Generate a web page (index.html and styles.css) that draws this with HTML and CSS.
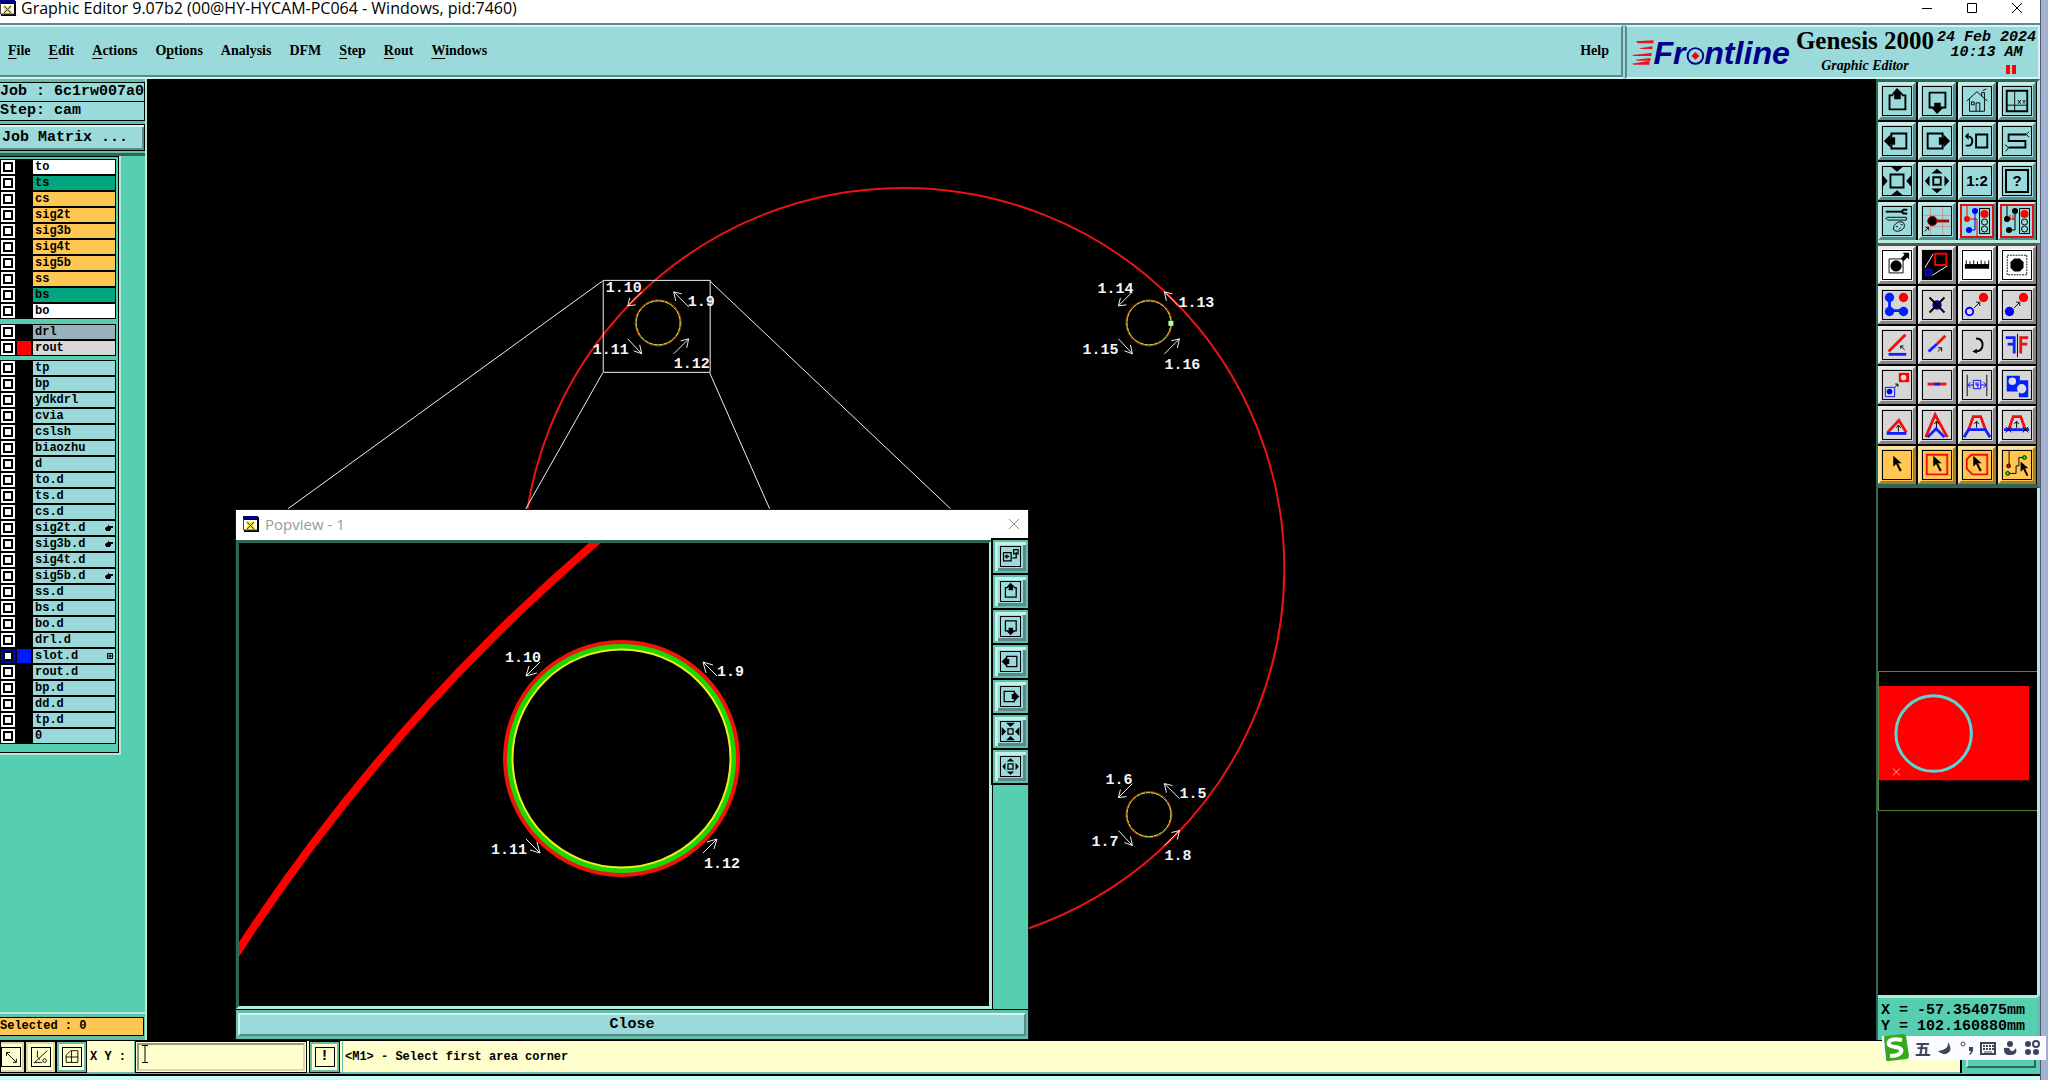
FILE: index.html
```html
<!DOCTYPE html>
<html lang="en">
<head>
<meta charset="utf-8">
<title>Graphic Editor</title>
<link rel="stylesheet" href="styles.css">
</head>
<body>
<svg class="defs" aria-hidden="true">
  <symbol id="up" viewBox="0 0 30 30"><path d="M11 9H7V24H24V9H20" class="k2"/><path d="M15 1l7 7h-3v5h-7v-5h-3z"/></symbol>
  <symbol id="down" viewBox="0 0 30 30"><path d="M12 22H7V6H24V22H19" class="k2"/><path d="M15 29l7-7h-3v-5h-7v5h-3z"/></symbol>
  <symbol id="left" viewBox="0 0 30 30"><path d="M9 11V7H25V23H9V19" class="k2"/><path d="M1 15l7-7v3h5v8h-5v3z"/></symbol>
  <symbol id="right" viewBox="0 0 30 30"><path d="M21 11V7H5V23H21V19" class="k2"/><path d="M29 15l-7-7v3h-5v8h5v3z"/></symbol>
  <symbol id="pan" viewBox="0 0 30 30"><path d="M11 11h8v8h-8z" class="k2"/><path d="M15 2l6 5h-12zM15 28l6-5h-12zM2 15l5-6v12zM28 15l-5-6v12z"/></symbol>
  <symbol id="zin" viewBox="0 0 30 30"><path d="M11 11h8v8h-8z" class="k2"/><path d="M8 1h14l-7 7zM8 29h14l-7-7zM1 8v14l7-7zM29 8v14l-7-7z"/></symbol>
  <symbol id="xwin" viewBox="0 0 16 16"><path d="M1 1h15v15h-15z"/><path fill="#fffff0" d="M1 4h13v10h-13z"/><path fill="#000080" d="M0 0h15v3h-15z"/><path fill="none" stroke="#e6d820" stroke-width="3" d="M4 6l7 7M11 6l-7 7"/><path fill="none" stroke="#444" d="M4 6l7 7M11 6l-7 7M.5 3v11h14"/></symbol>
  <symbol id="cursor" viewBox="0 0 12 18"><path d="M1 0v12l3-3 4 8 2-1-4-8h4z"/></symbol>
</svg>

<div class="window">
  <header class="titlebar">
    <svg class="appicon"><use href="#xwin"/></svg>
    <h1>Graphic Editor 9.07b2 (00@HY-HYCAM-PC064 - Windows, pid:7460)</h1>
    <div class="winbtns">
      <button aria-label="Minimize"><svg viewBox="0 0 12 12"><path d="M1 6.500h10"/></svg></button>
      <button aria-label="Maximize"><svg viewBox="0 0 12 12"><path d="M1.500 1.500h9v9h-9z"/></svg></button>
      <button aria-label="Close window"><svg viewBox="0 0 12 12"><path d="M1 1l10 10M11 1L1 11"/></svg></button>
    </div>
  </header>

  <div class="top">
    <nav class="menubar">
      <button><u>F</u>ile</button><button><u>E</u>dit</button><button><u>A</u>ctions</button><button>O<u>p</u>tions</button><button>Analysis</button><button>DFM</button><button><u>S</u>tep</button><button><u>R</u>out</button><button><u>W</u>indows</button>
      <button class="help">Help</button>
    </nav>
    <section class="brand">
      <svg class="logo" viewBox="0 0 166 48" role="img" aria-label="Frontline">
        <path fill="#e8131b" d="M5 11l18-1v3H7zM9 18l13-2v3H10zM1 25l20-2v3H3zM5 30l15-2v3H6zM1 34l18-3v4H3z"/>
        <text x="23" y="34">Fr</text><text x="75" y="34">ntline</text>
        <circle cx="66" cy="26" r="8" fill="none" stroke="#00008b" stroke-width="2"/>
        <path fill="#f00000" d="M66 22l4 4-4 4-4-4z"/>
      </svg>
      <div class="product"><strong>Genesis 2000</strong><em>Graphic Editor</em></div>
      <div class="clock"><span>24 Feb 2024</span><span>10:13 AM</span><i></i></div>
    </section>
  </div>

  <main>
    <aside class="side">
      <div class="job">
        <p>Job : 6c1rw007a0</p>
        <p>Step: cam</p>
      </div>
      <div class="matrix"><button>Job Matrix ...</button></div>
      <div class="layers">
        <div class="group">
          <label class="w"><input type="checkbox"><i></i><span>to</span></label>
          <label class="g"><input type="checkbox"><i></i><span>ts</span></label>
          <label class="o"><input type="checkbox"><i></i><span>cs</span></label>
          <label class="o"><input type="checkbox"><i></i><span>sig2t</span></label>
          <label class="o"><input type="checkbox"><i></i><span>sig3b</span></label>
          <label class="o"><input type="checkbox"><i></i><span>sig4t</span></label>
          <label class="o"><input type="checkbox"><i></i><span>sig5b</span></label>
          <label class="o"><input type="checkbox"><i></i><span>ss</span></label>
          <label class="g"><input type="checkbox"><i></i><span>bs</span></label>
          <label class="w"><input type="checkbox"><i></i><span>bo</span></label>
        </div>
        <div class="group">
          <label class="drill"><input type="checkbox"><i></i><span>drl</span></label>
          <label class="rout"><input type="checkbox"><i></i><span>rout</span></label>
        </div>
        <div class="group">
          <label><input type="checkbox"><i></i><span>tp</span></label>
          <label><input type="checkbox"><i></i><span>bp</span></label>
          <label><input type="checkbox"><i></i><span>ydkdrl</span></label>
          <label><input type="checkbox"><i></i><span>cvia</span></label>
          <label><input type="checkbox"><i></i><span>cslsh</span></label>
          <label><input type="checkbox"><i></i><span>biaozhu</span></label>
          <label><input type="checkbox"><i></i><span>d</span></label>
          <label><input type="checkbox"><i></i><span>to.d</span></label>
          <label><input type="checkbox"><i></i><span>ts.d</span></label>
          <label><input type="checkbox"><i></i><span>cs.d</span></label>
          <label><input type="checkbox"><i></i><span>sig2t.d<svg viewBox="0 0 8 8"><path d="M0 4l3-2 1-2v2h4v2h-2v2h-1v1H1z"/></svg></span></label>
          <label><input type="checkbox"><i></i><span>sig3b.d<svg viewBox="0 0 8 8"><path d="M0 4l3-2 1-2v2h4v2h-2v2h-1v1H1z"/></svg></span></label>
          <label><input type="checkbox"><i></i><span>sig4t.d</span></label>
          <label><input type="checkbox"><i></i><span>sig5b.d<svg viewBox="0 0 8 8"><path d="M0 4l3-2 1-2v2h4v2h-2v2h-1v1H1z"/></svg></span></label>
          <label><input type="checkbox"><i></i><span>ss.d</span></label>
          <label><input type="checkbox"><i></i><span>bs.d</span></label>
          <label><input type="checkbox"><i></i><span>bo.d</span></label>
          <label><input type="checkbox"><i></i><span>drl.d</span></label>
          <label class="active"><input type="checkbox" checked><i></i><span>slot.d<svg viewBox="0 0 8 8"><path class="k1" d="M2.500 1.500h5v5h-5zM5 1.500v5M2.500 4h5"/></svg></span></label>
          <label><input type="checkbox"><i></i><span>rout.d</span></label>
          <label><input type="checkbox"><i></i><span>bp.d</span></label>
          <label><input type="checkbox"><i></i><span>dd.d</span></label>
          <label><input type="checkbox"><i></i><span>tp.d</span></label>
          <label><input type="checkbox"><i></i><span>0</span></label>
        </div>
      </div>
      <div class="selected"><p>Selected : 0</p></div>
    </aside>

    <section class="canvas">
      <svg class="board" viewBox="147 79 1730 961" preserveAspectRatio="xMinYMin meet">
        <circle cx="904" cy="569" r="381" fill="none" stroke="#ea1414" stroke-width="2"/>
        <g class="thin"><path d="M603.500 280.500h107v92h-107zM603 281L288 509M710 281L951 509M603 373L526 509M710 373L770 509"/></g>
        <g id="ring">
          <circle cx="658.500" cy="323" r="23" fill="none" stroke="#c83008" stroke-width="1"/>
          <circle cx="658.500" cy="323" r="22" fill="none" stroke="#3fa020"/>
          <circle cx="658.500" cy="323" r="22" fill="none" stroke="#f0d830" stroke-dasharray="4 1"/>
          <g class="thin"><path d="M642 292l-14 14l2-8M628 306l8-1M689 307l-15-15l8 2M674 292l2 9M628 339l14 15l-8-3M642 354l-2-9M674 354l15-15l-8 2M689 339l-2 9"/></g>
        </g>
        <use href="#ring" x="491"/><use href="#ring" x="491" y="492"/>
        <path fill="#b0ffb0" d="M1169 321h5v5h-5z"/>
        <g class="tag">
          <text x="606" y="292">1.10</text><text x="688" y="306">1.9</text><text x="593" y="354">1.11</text><text x="674" y="368">1.12</text>
          <text x="1098" y="293">1.14</text><text x="1179" y="307">1.13</text><text x="1083" y="354">1.15</text><text x="1165" y="369">1.16</text>
          <text x="1106" y="784">1.6</text><text x="1180" y="798">1.5</text><text x="1092" y="846">1.7</text><text x="1165" y="860">1.8</text>
        </g>
      </svg>

      <section class="popview">
        <header><svg class="appicon"><use href="#xwin"/></svg><h2>Popview - 1</h2>
          <button aria-label="Close popview"><svg viewBox="0 0 12 12"><path d="M1 1l10 10M11 1L1 11"/></svg></button></header>
        <div class="popbody">
          <svg class="popcanvas" viewBox="239 543 750 463">
            <circle cx="1837" cy="1990" r="1907" fill="none" stroke="#f00" stroke-width="8"/>
            <circle cx="621.500" cy="758.500" r="116" fill="none" stroke="#f01408" stroke-width="5"/>
            <circle cx="621.500" cy="758.500" r="112" fill="none" stroke="#18d800" stroke-width="5"/>
            <circle cx="621.500" cy="758.500" r="109" fill="none" stroke="#f0f020" stroke-width="2"/>
            <g class="thin"><path d="M540 662l-14 14l3-10M526 676l11-3M717 676l-14-14l10 3M703 662l3 11M526 839l14 14l-10-3M540 853l-3-11M703 853l14-14l-10 3M717 839l-3 10"/></g>
            <g class="tag"><text x="505" y="662">1.10</text><text x="717" y="676">1.9</text><text x="491" y="854">1.11</text><text x="704" y="868">1.12</text></g>
          </svg>
          <div class="poptools">
            <button aria-label="Transfer view"><svg viewBox="0 0 30 30"><path class="k2" d="M4 9h12v13h-12zM20 4h7v7h-7zM24 8v9h-6"/><path class="k2" d="M13 15h-6M10 12l-3 3 3 3"/></svg></button>
            <button aria-label="Up"><svg><use href="#up"/></svg></button>
            <button aria-label="Down"><svg><use href="#down"/></svg></button>
            <button aria-label="Left"><svg><use href="#left"/></svg></button>
            <button aria-label="Right"><svg><use href="#right"/></svg></button>
            <button aria-label="Zoom in"><svg><use href="#zin"/></svg></button>
            <button aria-label="Zoom out"><svg><use href="#pan"/></svg></button>
          </div>
        </div>
        <footer><button>Close</button></footer>
      </section>
    </section>

    <aside class="tools">
      <div class="pad view">
        <button aria-label="Pan up"><svg><use href="#up"/></svg></button>
        <button aria-label="Pan down"><svg><use href="#down"/></svg></button>
        <button aria-label="Home"><svg viewBox="0 0 30 30"><path class="k1 bold" d="M4 15L15 5l11 10M7 13v13h16V13M14 26v-9h4v9M9 16h3v3h-3zM20 10V6h3v6M21 4l4-2"/></svg></button>
        <button aria-label="Zoom to coordinates"><svg viewBox="0 0 30 30"><path class="k2" d="M4 4h22v22h-22z"/><path class="k1" d="M12.500 4v22M4 19.500h22M16 14l3 4M19 14l-3 4M21 14l1.500 2L24 14M22.500 16v2"/></svg></button>
        <button aria-label="Pan left"><svg><use href="#left"/></svg></button>
        <button aria-label="Pan right"><svg><use href="#right"/></svg></button>
        <button aria-label="Previous view"><svg viewBox="0 0 30 30"><path class="k2" d="M14 8h12v14h-12zM3 20h4q3-1 3-5t-4-5"/><path d="M2 10l4-4v8z"/></svg></button>
        <button aria-label="Snake"><svg viewBox="0 0 30 30"><path class="k2" d="M25 8H6v7h18v7H6"/><path class="k1" d="M25 8l3-3M25 8l3 3M6 22l-4-3M6 22l-3 4"/></svg></button>
        <button aria-label="Zoom in"><svg viewBox="0 0 30 30"><path class="k2" d="M8 8h14v14h-14z"/><path d="M9 0h12l-6 5zM9 30h12l-6-5zM0 9v12l5-6zM30 9v12l-5-6z"/></svg></button>
        <button aria-label="Zoom out"><svg><use href="#pan"/></svg></button>
        <button aria-label="Zoom one to two"><b>1:2</b></button>
        <button aria-label="Query"><b class="boxed">?</b></button>
        <button aria-label="Options"><svg viewBox="0 0 30 30"><path class="k2" d="M3 5h17"/><path class="k1" d="M3 12l2-1h20v3H5zM12 20q3-5 9-4 4 4 0 8-6 4-10 0zM14 21h2M19 19h2M17 24l2-2"/><path class="k2" d="M26 3h-4l-2 2 2 2h4"/></svg></button>
        <button aria-label="Measure"><svg viewBox="0 0 30 30"><path stroke="#d09090" d="M8 0v30M21 0v30M0 9h30M0 21h30"/><path stroke="#a00" stroke-width="3" d="M10 15h18"/><circle cx="10" cy="15" r="5" stroke="#c00"/><path class="k1" d="M2 26l4-4M3 22h3v3"/></svg></button>
        <button class="on" aria-label="Highlight nets"><svg viewBox="0 0 30 30"><path fill="none" stroke="#f00" d="M5 0v13h10v17"/><path fill="none" stroke="#00f" d="M13 5v19H7"/><circle cx="5" cy="13" r="3" fill="#f00"/><circle cx="13" cy="5" r="3" fill="#00f"/><circle cx="7" cy="24" r="3" fill="#00f"/><path class="k1" d="M17.500 2.500h10v25h-10z"/><circle cx="22.500" cy="8" r="4" fill="#f00"/><circle class="k1" cx="22.500" cy="16" r="3"/><circle class="k1" cx="22.500" cy="23" r="3"/></svg></button>
        <button class="on" aria-label="Highlight points"><svg viewBox="0 0 30 30"><path class="k1" d="M5 0v13M13 5v19H7"/><path stroke="#f00" fill="none" d="M5 13h8M8 9v5M11 9v5"/><circle cx="5" cy="13" r="3"/><circle cx="13" cy="5" r="3"/><circle cx="7" cy="24" r="3"/><path class="k1" d="M17.500 2.500h10v25h-10z"/><circle cx="22.500" cy="8" r="4" fill="#f00"/><circle class="k1" cx="22.500" cy="16" r="3"/><circle class="k1" cx="22.500" cy="23" r="3"/></svg></button>
      </div>
      <div class="pad edit">
        <button class="lit" aria-label="Select feature"><svg viewBox="0 0 30 30"><path class="k1" d="M6.500 8.500h15v15h-15z"/><circle cx="14" cy="16" r="6"/><path d="M19 8l4-4-2-2h7v7l-2-2-4 4z"/></svg></button>
        <button class="dark" aria-label="Popview"><svg viewBox="0 0 30 30"><path fill="none" stroke="#f00" stroke-width="2" d="M13 3h12v12h-12z"/><path fill="none" stroke="#00f" stroke-width="2" d="M3 20h6v6h-6z"/><path stroke="#fff" d="M2 18L11 3M10 26l16-10"/></svg></button>
        <button class="lit" aria-label="Ruler"><svg viewBox="0 0 30 30"><path d="M2 14h26v5h-26z"/><path class="k1" d="M3.500 10v5M7.500 11v4M11.500 10v5M15.500 11v4M19.500 10v5M23.500 11v4M27.500 10v5"/></svg></button>
        <button class="lit" aria-label="Reference"><svg viewBox="0 0 30 30"><path class="k1" stroke-dasharray="2 1" d="M4.500 4.500h21v21h-21z"/><path d="M12 8h6l4 4v6l-4 4h-6l-4-4v-6z"/></svg></button>
        <button aria-label="Add"><svg viewBox="0 0 30 30"><path stroke="#0020ff" stroke-width="3" fill="none" d="M7 7v14h15"/><g fill="#0020ff"><circle cx="7" cy="7" r="5"/><circle cx="7" cy="22" r="5"/><circle cx="22" cy="22" r="5"/></g><circle cx="22" cy="7" r="5" fill="#f00"/></svg></button>
        <button aria-label="Delete"><svg viewBox="0 0 30 30"><circle cx="15" cy="15" r="5" fill="#00a"/><path class="k2" d="M7 7l16 16M23 7L7 23"/></svg></button>
        <button aria-label="Copy"><svg viewBox="0 0 30 30"><circle cx="22" cy="7" r="5" fill="#f00"/><circle cx="7" cy="22" r="4" fill="none" stroke="#00f" stroke-width="2"/><path class="k1" d="M12 18l6-6M14 12h4v4"/></svg></button>
        <button aria-label="Move"><svg viewBox="0 0 30 30"><circle cx="22" cy="7" r="5" fill="#f00"/><circle cx="7" cy="22" r="5" fill="#00f"/><path class="k1" d="M12 18l6-6M14 12h4v4"/></svg></button>
        <button aria-label="Rotate line"><svg viewBox="0 0 30 30"><path class="red" d="M6 22L24 4"/><path class="blue" d="M6 25h19"/><path class="k1" d="M23 20l-4-4M19 19v-3h3"/></svg></button>
        <button aria-label="Extend line"><svg viewBox="0 0 30 30"><path class="red" d="M15 14L24 5"/><path class="blue" d="M6 22L15 14"/><path class="k1" d="M16 22l4-4M16 18h4v4"/></svg></button>
        <button aria-label="Rotate"><svg viewBox="0 0 30 30"><path class="k2" d="M14 8q7 0 7 7t-9 7"/><path d="M10 22l5-3v5z"/></svg></button>
        <button aria-label="Mirror"><svg viewBox="0 0 30 30"><path class="k1" d="M15.500 3v25"/><path class="blue" d="M3 7h9v17M12 14H5"/><path class="red" d="M27 7h-8v17M19 14h7"/></svg></button>
        <button aria-label="Transform"><svg viewBox="0 0 30 30"><path fill="#f00" d="M17 2h11v10H17z"/><circle cx="22" cy="7" r="3" fill="#ddd"/><path fill="none" stroke="#00f" d="M2.500 17.500h10v10h-10z"/><circle cx="7" cy="22" r="3" fill="#00f"/><path class="k1" d="M13 17l3-3M13 14h3v3"/></svg></button>
        <button aria-label="Connect"><svg viewBox="0 0 30 30"><path class="red" d="M5 14h20"/><path class="blue" d="M12 14h6"/></svg></button>
        <button aria-label="Spacing"><svg viewBox="0 0 30 30"><path class="k1" d="M4.500 4v23M25.500 4v23"/><path stroke="#00f" fill="none" d="M11 10h8v9h-8zM5 15h6M19 15h6M8 12l-3 3 3 3M22 12l3 3-3 3M14 12v3h3M16 12v6"/></svg></button>
        <button aria-label="Surface"><svg viewBox="0 0 30 30"><path fill="#0020ff" d="M4 5h14v5h9v18H17v-6H4z"/><circle cx="10" cy="11" r="4" fill="#ddd"/><circle cx="20" cy="19" r="5" fill="#ddd"/></svg></button>
        <button aria-label="Round corner"><svg viewBox="0 0 30 30"><path class="red" d="M5 23L17 10l8 13"/><path class="blue" d="M4 24h21"/><path class="k1" d="M16.500 22v-7M14 18l2.500-3 2.500 3"/></svg></button>
        <button aria-label="Peak"><svg viewBox="0 0 30 30"><path class="red" d="M3 28L13 4l13 24"/><path class="blue" d="M5 28l9-9 9 9"/><path class="k1" d="M14.500 18v-7M12 14l2.500-3 2.500 3"/></svg></button>
        <button aria-label="Trapezoid"><svg viewBox="0 0 30 30"><path class="red" d="M6 20l5-14h8l5 14"/><path class="blue" d="M1 28l5-8h18l5 8"/><path class="k1" d="M14.500 18v-7M12 14l2.500-3 2.500 3"/></svg></button>
        <button aria-label="Trim"><svg viewBox="0 0 30 30"><path class="red" d="M6 20l5-14h8l5 14"/><path class="blue" d="M1 20h27"/><path class="k1" d="M14.500 18v-7M12 14l2.500-3 2.500 3M3 17l6 6M9 17l-6 6M21 17l6 6M27 17l-6 6"/></svg></button>
        <button class="pick" aria-label="Pick"><svg viewBox="0 0 30 30"><use href="#cursor" x="10" y="5" width="12" height="18"/></svg></button>
        <button class="pick" aria-label="Pick frame"><svg viewBox="0 0 30 30"><path class="red" d="M4 4h22v21h-22z"/><use href="#cursor" x="10" y="5" width="12" height="18"/></svg></button>
        <button class="pick" aria-label="Pick polygon"><svg viewBox="0 0 30 30"><path class="red" d="M9 4h17v21H10l-6-6V9z"/><use href="#cursor" x="10" y="5" width="12" height="18"/></svg></button>
        <button class="pick" aria-label="Pick net"><svg viewBox="0 0 30 30"><path class="k1" d="M6.500 0v15M6 24h8v-8h3V7h6"/><circle cx="6" cy="16" r="2" fill="#f00" stroke="#000"/><circle cx="5" cy="24" r="2" fill="#0f0" stroke="#000"/><circle cx="23" cy="7" r="2" fill="#0f0" stroke="#000"/><use href="#cursor" x="18" y="11" width="11" height="17"/></svg></button>
      </div>
      <div class="overview">
        <svg viewBox="1878 671 160 141">
          <path fill="#f00" d="M1878 686h152v95h-152z"/>
          <path fill="none" stroke="#568b35" d="M1878.500 671.500h170v140h-170z"/>
          <circle cx="1934" cy="734" r="38" fill="none" stroke="#56d8d8" stroke-width="3"/>
          <path stroke="#e8b8b8" d="M1893 769l7 7M1900 769l-7 7"/>
        </svg>
      </div>
      <div class="coords"><pre>X = -57.354075mm
Y = 102.160880mm</pre></div>
    </aside>
  </main>

  <footer class="status">
    <div class="modes">
      <button aria-label="Line snap"><svg viewBox="0 0 20 20"><path class="k1" d="M5 5l11 11M5 9V5h4M16 12v4h-4"/></svg></button>
      <button aria-label="Angle"><svg viewBox="0 0 20 20"><path class="k1" d="M3 16L17 3M2 16h9M6 3v7l3 3"/><circle class="k1" cx="14" cy="14" r="2"/></svg></button>
      <button class="teal" aria-label="Grid"><svg viewBox="0 0 20 20"><path class="k1" d="M3.500 8l5-5h8v13h-13zM9.500 3v13M3 10h14"/></svg></button>
    </div>
    <label for="xy">X Y :</label>
    <div class="entry"><input id="xy" type="text"><svg viewBox="0 0 8 18"><path class="k1" d="M1 .5h6M4 1v16M1 17.500h6"/></svg></div>
    <button class="teal alert" aria-label="Messages"><b>!</b></button>
    <output>&lt;M1&gt; - Select first area corner</output>
    <div class="corner"><button aria-label="Interrupt"></button></div>
  </footer>
</div>

<div class="ime">
  <svg class="sogou" viewBox="0 0 28 28"><path fill="#35a91a" d="M3 4Q2 3 4 2L22 0q3 0 3 2l3 20q0 2-2 3L8 27q-3 1-3-2z"/><path fill="none" stroke="#fff" stroke-width="4" d="M21 6Q10 4 8 8t6 5 6 5-11 4"/></svg>
  <span>五</span>
  <svg viewBox="0 0 16 16"><path d="M11 2q1 8-10 9 5 5 10 2t0-11z"/></svg>
  <svg viewBox="0 0 16 16"><circle cx="4" cy="4" r="2" fill="none" stroke="#3c4558"/><path d="M10 7h4v4q-1 3-4 4l2-4h-2z"/></svg>
  <svg viewBox="0 0 16 16"><path fill="none" stroke="#3c4558" stroke-width="2" d="M1 3h14v11H1z"/><path stroke="#3c4558" stroke-width="2" stroke-dasharray="2 1" d="M3 6h11M3 9h11"/><path stroke="#3c4558" d="M4 12h8"/></svg>
  <svg viewBox="0 0 16 16"><circle cx="8" cy="4" r="3"/><path d="M2 8q6-1 6 2 3 3 6-2 2 7-5 7-8 1-7-7z"/></svg>
  <svg viewBox="0 0 16 16"><circle cx="4" cy="4" r="3"/><circle cx="12" cy="4" r="3" fill="none" stroke="#3c4558" stroke-width="2"/><circle cx="4" cy="12" r="3"/><circle cx="12" cy="12" r="3"/></svg>
</div>
</body>
</html>
```
FILE: styles.css
```css
:root {
  --aqua: #9bdada;
  --aqua-light: #d2f6f4;
  --aqua-dark: #5a8a8b;
  --green: #55cfb0;
  --green-mid: #64bfa8;
  --green-light: #b4ebdc;
  --green-dark: #2f6557;
  --cream: #ffffce;
  --mono: "Liberation Mono", "Courier New", monospace;
  --serif: "Liberation Serif", "Times New Roman", serif;
  --ui: "Open Sans", "Segoe UI", sans-serif;
}
* { box-sizing: border-box; }
body {
  margin: 0;
  min-height: 100vh;
  background: #a3b3cf;
  padding-right: 7px;
  color: #000;
  overflow: hidden;
}
button { margin: 0; padding: 0; border: 0; background: none; color: inherit; font: inherit; display: grid; place-items: center; }
h1, h2, p, pre { margin: 0; font: inherit; }
svg { display: block; }
.defs { position: absolute; width: 0; height: 0; }
.k1 { fill: none; stroke: #000; stroke-width: 1px; }
.k2 { fill: none; stroke: #000; stroke-width: 2px; }
.red { fill: none; stroke: #f01010; stroke-width: 2px; }
.blue { fill: none; stroke: #1020ff; stroke-width: 2px; }
.edit .red, .edit .blue { stroke-width: 3px; }
.edit .pick .red { stroke-width: 2px; }

.window { display: flex; flex-direction: column; height: 100vh; border-right: 1px solid #557; }
.titlebar { display: flex; align-items: center; height: 23px; background: #fff; font: 16px/16px var(--ui); padding-bottom: 8px; }
.titlebar .appicon { margin-right: 5px; }
.appicon { width: 16px; height: 16px; }
.winbtns { display: flex; gap: 33px; margin-left: auto; padding-right: 17px; }
.winbtns svg { width: 12px; height: 12px; }
.winbtns path, .popview header path { fill: none; stroke: #000; }

.top { display: flex; height: 56px; border-top: 2px solid var(--aqua-dark); background: var(--aqua); }
.menubar {
  flex: 1; display: flex; align-items: center; gap: 18px; padding: 0 12px 0 8px;
  border: solid; border-width: 2px 2px 2px 0;
  border-color: var(--aqua-light) var(--aqua-dark) var(--aqua-dark);
  box-shadow: 0 2px var(--aqua-light);
  font: bold 14px/18px var(--serif); margin-bottom: 2px;
}
.menubar button { display: block; }
.menubar u { text-underline-offset: 3px; }
.help { margin-left: auto; }
.brand {
  width: 415px; margin-left: 2px; display: flex; align-items: flex-start; padding: 3px 2px 0 4px; gap: 4px;
  border: 2px solid var(--aqua-light); border-left-color: var(--aqua-dark);
}
.logo { width: 166px; height: 48px; }
.logo text { font: italic bold 33px "Liberation Sans", Arial, sans-serif; fill: #00008b; }
.product { display: flex; flex-direction: column; align-items: center; width: 136px; }
.product strong { font: bold 25px/22px var(--serif); white-space: nowrap; }
.product em { font: italic bold 14px/20px var(--serif); margin-top: 4px; }
.clock { flex: 1; display: flex; flex-direction: column; align-items: center; font: italic bold 15px/15px var(--mono); white-space: nowrap; }
.clock i { width: 10px; height: 9px; margin: 5px 0 0 50px; border: solid #f00; border-width: 0 4px; }

main { flex: 1; min-height: 0; display: grid; grid-template-columns: 147px minmax(0, 1fr) 164px; background: #000; }

.side { display: flex; flex-direction: column; background: var(--green); border-right: 2px solid var(--green-light); font: bold 15px/18px var(--mono); white-space: nowrap; }
.job { padding: 3px 0 4px; background: var(--green-mid); }
.job p { width: 145px; height: 20px; border: 1px solid #000; border-left: 0; background: var(--aqua); overflow: hidden; margin-bottom: -1px; }
.matrix { background: var(--green-mid); border-bottom: 3px solid var(--green-dark); padding-bottom: 2px; }
.matrix button {
  width: 145px; height: 27px; padding-left: 2px; justify-items: start; background: var(--aqua);
  border: 1px solid #000; border-left: 0;
  box-shadow: inset 0 2px var(--aqua-light), inset -2px -2px var(--aqua-dark);
}
.layers { align-self: flex-start; width: 121px; padding: 3px 3px 9px 0; border: solid var(--green-light); border-width: 0 2px 2px 0; box-shadow: inset -1px -1px #000, inset 0 1px #000; background: var(--green); display: flex; flex-direction: column; gap: 4px; }
.group { background: #000; padding: 1px 0 1px 1px; display: flex; flex-direction: column; gap: 2px; }
.group:first-child { margin-bottom: 1px; }
.group label { display: grid; grid-template-columns: 14px 14px 1fr; gap: 2px; height: 14px; padding-right: 1px; --fill: var(--aqua); font: bold 12px/14px var(--mono); }
.group input { appearance: none; margin: 0; border: 2px solid #fff; background: #fff; box-shadow: inset 0 0 0 2px #000; }
.group label span { background: var(--fill); padding-left: 2px; display: flex; align-items: center; justify-content: space-between; padding-right: 2px; }
.group span svg { width: 8px; height: 8px; }
.group .w { --fill: #fff; }
.group .g { --fill: #00a67e; }
.group .o { --fill: #ffc651; }
.group .drill { --fill: #98b2bb; }
.group .rout { --fill: #d8d8d8; }
.group .rout i { background: #f00; }
.group .active i { background: #0018ff; }
.group .active input { border-color: #00109c; }
.selected { margin-top: auto; padding: 3px 0 4px; background: var(--green-mid); border-top: 2px solid var(--green-light); font: bold 12px/17px var(--mono); }
.selected p { width: 144px; border: 1px solid #000; border-left: 0; background: #ffc651; }

.canvas { position: relative; overflow: hidden; background: #000; }
.board { width: 100%; height: 100%; }
.thin path { fill: none; stroke: #f0f0f0; stroke-width: 1px; }
.tag { font: bold 15px var(--mono); fill: #f4f4f4; stroke: none; }

.popview { position: absolute; left: 88px; top: 430px; width: 794px; background: #000; border: 1px solid #111; display: flex; flex-direction: column; }
.popview header { display: flex; align-items: center; gap: 6px; height: 30px; padding: 0 8px 3px 7px; background: #fff; color: #999; font: 15px/18px var(--ui); }
.popview header button { margin-left: auto; }
.popview header button svg { width: 12px; height: 12px; }
.popview header button path { stroke: #888; }
.popbody { display: flex; gap: 1px; }
.popcanvas { flex: 1; min-width: 0; background: #000; border: 3px solid var(--green-light); border-top-color: var(--green-dark); border-left-color: var(--green-dark); }
.poptools { width: 35px; background: var(--green); display: flex; flex-direction: column; }
.poptools button { height: 33px; margin-bottom: 2px; background: var(--aqua); border: 2px solid var(--green-mid); outline: 2px solid #000; box-shadow: inset 3px 3px #bff2ea, inset -3px -3px var(--aqua-dark); }
.poptools svg { width: 21px; height: 21px; border: 1px solid #000; }
.popview footer { padding: 3px 2px; background: var(--green-mid); border-top: 1px solid #000; }
.popview footer button { width: 100%; height: 23px; background: var(--aqua); border: 2px solid; border-color: var(--aqua-light) var(--aqua-dark) var(--aqua-dark) var(--aqua-light); font: bold 15px/16px var(--mono); }

.tools { display: flex; flex-direction: column; background: #000; border-left: 2px solid var(--green-dark); }
.pad { display: grid; grid-template-columns: repeat(4, 38px); gap: 2px; background: #000; border: 3px solid var(--green-light); border-width: 3px 3px 3px 0; border-top-color: var(--green-dark); }
.edit { border-color: #555 #777 var(--green-dark); border-bottom-width: 4px; }
.pad button { --face: var(--aqua); --lo: var(--aqua-dark); --hi: #c5eeea; width: 38px; height: 38px; background: var(--face); border: 3px solid; border-color: var(--hi) var(--lo) var(--lo) var(--hi); }
.pad button > svg, .pad button > b { width: 30px; height: 30px; border: 1px solid #000; }
.pad b { display: grid; place-items: center; font: bold 15px/16px "Liberation Sans", Arial, sans-serif; }
.pad .boxed { box-shadow: inset 0 0 0 2px var(--aqua), inset 0 0 0 4px #000; }
.edit button { --face: #d6d6d6; --lo: #858585; --hi: #ececec; }
.pad .lit { --face: #fff; }
.pad .dark > svg { background: #000; }
.pad .on > svg { border: 0; outline: 2px solid #e01010; }
.pad .pick { --face: #ffc651; --lo: #a07c30; --hi: #ffe3a0; }
.overview { flex: 1; min-height: 0; display: flex; align-items: center; border-right: 3px solid var(--green-light); }
.overview svg { width: 100%; }
.coords { height: 45px; padding: 5px 3px; background: var(--green); border-top: 3px solid var(--green-light); font: bold 15px/16px var(--mono); border-right: 3px solid var(--green-mid); }
.coords pre { font: inherit; }

.status { display: flex; height: 40px; background: var(--cream); border-top: 1px solid #000; border-bottom: 4px solid #c8fafa; box-shadow: inset 0 -2px #000, inset 0 -4px var(--green-mid); padding-bottom: 3px; font: bold 12px/16px var(--mono); }
.modes { display: flex; }
.modes button { width: 31px; border: 3px solid #d8d8a8; outline: 1px solid #000; outline-offset: -1px; background: var(--cream); }
.modes button:first-child { width: 25px; border-left: 0; }
.modes svg, .alert b { width: 20px; height: 20px; border: 1px solid #000; }
.modes .teal, .alert { width: 31px; border: 3px solid var(--green-mid); background: var(--cream); outline: 1px solid #000; outline-offset: -1px; }
.status label { width: 48px; padding: 8px 0 0 3px; border-right: 1px solid var(--green-mid); }
.entry { display: grid; width: 172px; padding: 1px; border: 1px solid #000; }
.entry input { grid-area: 1 / 1; min-width: 0; width: 100%; border: 2px solid; border-color: #9a9a78 #d8d8a8 #d8d8a8 #9a9a78; background: var(--cream); font: inherit; }
.entry svg { grid-area: 1 / 1; width: 8px; height: 18px; margin: 2px 4px; }
.alert { margin: 0 2px; }
.alert b { font: bold 15px/18px var(--mono); }
.status output { flex: 1; padding: 8px 2px 0; border-left: 1px solid var(--green-mid); }
.corner { width: 80px; padding: 5px 4px; background: var(--green); border-left: 2px solid #000; }
.corner button { width: 100%; height: 100%; border: 2px solid; border-color: var(--green-light) var(--green-dark) var(--green-dark) var(--green-light); }

.ime { position: fixed; right: 2px; bottom: 20px; display: flex; align-items: center; justify-content: space-between; width: 164px; height: 24px; padding-right: 6px; background: #fafcff; color: #3c4558; font: bold 16px/20px "Noto Sans CJK SC", sans-serif; }
.ime svg { width: 16px; height: 16px; fill: #3c4558; }
.ime .sogou { width: 28px; height: 28px; margin-left: -1px; }
```
